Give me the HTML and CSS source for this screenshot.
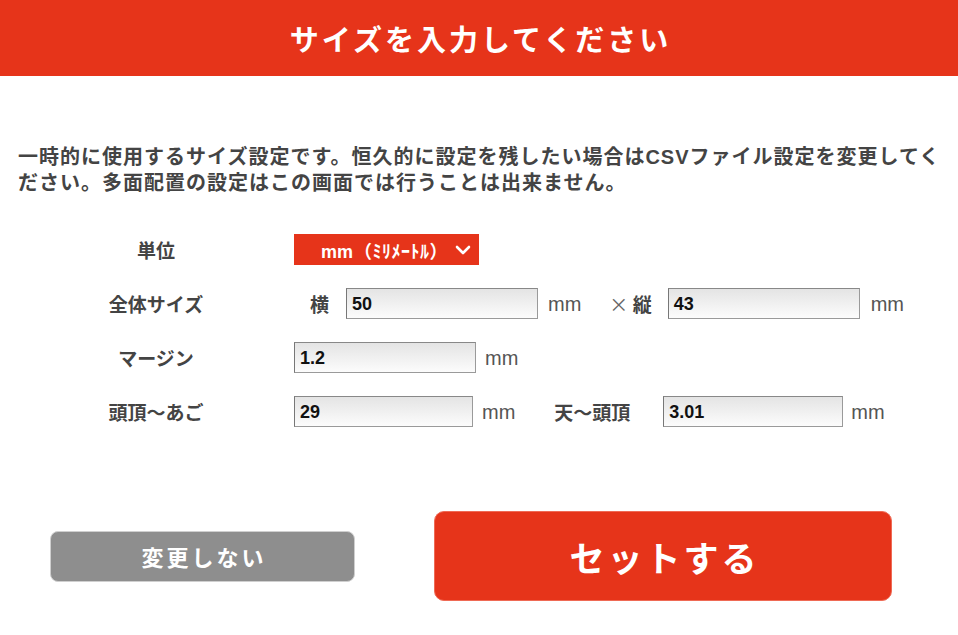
FILE: index.html
```html
<!DOCTYPE html>
<html lang="ja">
<head>
<meta charset="utf-8">
<title>サイズを入力してください</title>
<link rel="stylesheet" href="styles.css">
</head>
<body>
<header class="header">サイズを入力してください</header>
<p class="desc">一時的に使用するサイズ設定です。恒久的に設定を残したい場合はCSVファイル設定を変更してください。多面配置の設定はこの画面では行うことは出来ません。</p>
<div class="form">
  <div class="row">
    <div class="label">単位</div>
    <div class="select">
      <span class="select-text">mm<span class="paren">（ﾐﾘﾒｰﾄﾙ）</span></span>
      <svg class="chev" width="16" height="10" viewBox="0 0 16 10"><path d="M2 2 L8 8 L14 2" fill="none" stroke="#fff" stroke-width="2.6" stroke-linecap="round" stroke-linejoin="round"/></svg>
    </div>
  </div>
  <div class="row">
    <div class="label">全体サイズ</div>
    <span class="sub sub-yoko">横</span>
    <div class="input w192">50</div>
    <span class="unit u-a">mm</span>
    <span class="sub sub-tate"><span class="times">×</span> 縦</span>
    <div class="input w192">43</div>
    <span class="unit u-b">mm</span>
  </div>
  <div class="row">
    <div class="label">マージン</div>
    <div class="input w182">1.2</div>
    <span class="unit u-c">mm</span>
  </div>
  <div class="row">
    <div class="label">頭頂～あご</div>
    <div class="input w179">29</div>
    <span class="unit u-c">mm</span>
    <span class="sub sub-ten">天～頭頂</span>
    <div class="input w180">3.01</div>
    <span class="unit u-d">mm</span>
  </div>
</div>
<div class="actions">
  <button class="btn btn-gray">変更しない</button>
  <button class="btn btn-red">セットする</button>
</div>
</body>
</html>
```
FILE: styles.css
```css
html, body {
  margin: 0;
  padding: 0;
  background: #fff;
}
body {
  width: 958px;
  font-family: "Noto Sans CJK JP", "Liberation Sans", sans-serif;
  color: #444;
}
.header {
  height: 76px;
  background: #e6341a;
  color: #fff;
  display: flex;
  align-items: center;
  justify-content: center;
  font-size: 29px;
  font-weight: 700;
  letter-spacing: 3px;
  padding-left: 3px;
}
.desc {
  margin: 68px 0 0 0;
  padding: 0 10px 0 18px;
  font-family: "Liberation Sans", "Noto Sans CJK JP", sans-serif;
  font-size: 20px;
  line-height: 26px;
  font-weight: 700;
  letter-spacing: 1px;
  color: #444;
}
.form {
  margin-top: 38px;
  display: flex;
  flex-direction: column;
  gap: 23px;
}
.row {
  display: flex;
  align-items: center;
  height: 31px;
  padding-left: 80px;
}
.label {
  width: 152px;
  margin-right: 62px;
  text-align: center;
  font-size: 19px;
  font-weight: 700;
  color: #444;
}
.select {
  width: 185px;
  height: 31px;
  background: #e6341a;
  display: flex;
  align-items: center;
  box-sizing: border-box;
  padding-left: 27px;
  color: #fff;
}
.select-text {
  font-family: "Liberation Sans", "Noto Sans CJK JP", sans-serif;
  font-size: 18px;
  font-weight: 700;
}
.paren {
  font-family: "Noto Sans CJK JP", sans-serif;
  font-size: 18px;
  margin-left: 1px;
  letter-spacing: 0.5px;
}
.chev {
  margin-left: 7px;
}
.sub {
  font-size: 19px;
  font-weight: 700;
  color: #444;
}
.sub-yoko { margin-left: 16px; margin-right: 17px; }
.sub-tate { margin-left: 28px; margin-right: 16px; }
.times { font-weight: 400; color: #666; }
.sub-ten { margin-left: 39px; margin-right: 33px; }
.input {
  height: 31px;
  box-sizing: border-box;
  border: 1px solid #9a9a9a;
  border-top-color: #888;
  border-left-color: #777;
  background: linear-gradient(#e4e4e4, #fcfcfc);
  font-family: "Liberation Sans", sans-serif;
  font-size: 18px;
  font-weight: 700;
  color: #111;
  display: flex;
  align-items: center;
  padding-left: 5px;
  padding-top: 1px;
}
.w192 { width: 192px; }
.w182 { width: 182px; }
.w179 { width: 179px; }
.w180 { width: 180px; }
.unit {
  font-family: "Liberation Sans", sans-serif;
  font-size: 20px;
  color: #555;
  padding-top: 2px;
}
.u-a { margin-left: 10px; }
.u-b { margin-left: 11px; }
.u-c { margin-left: 9px; }
.u-d { margin-left: 8px; }
.actions {
  margin-top: 84px;
  display: flex;
  align-items: center;
  padding-left: 50px;
  gap: 79px;
}
.btn {
  font-family: "Noto Sans CJK JP", sans-serif;
  font-weight: 700;
  color: #fff;
  cursor: pointer;
  padding: 0;
}
.btn-gray {
  width: 305px;
  height: 51px;
  background: #8e8e8e;
  border: 1px solid #cfcfcf;
  border-radius: 8px;
  font-size: 22px;
  letter-spacing: 3px;
  padding-left: 3px;
}
.btn-red {
  width: 458px;
  height: 90px;
  background: #e6341a;
  border: 1px solid #ef6a55;
  border-radius: 10px;
  font-size: 35px;
  letter-spacing: 3px;
  padding-left: 3px;
}
```
